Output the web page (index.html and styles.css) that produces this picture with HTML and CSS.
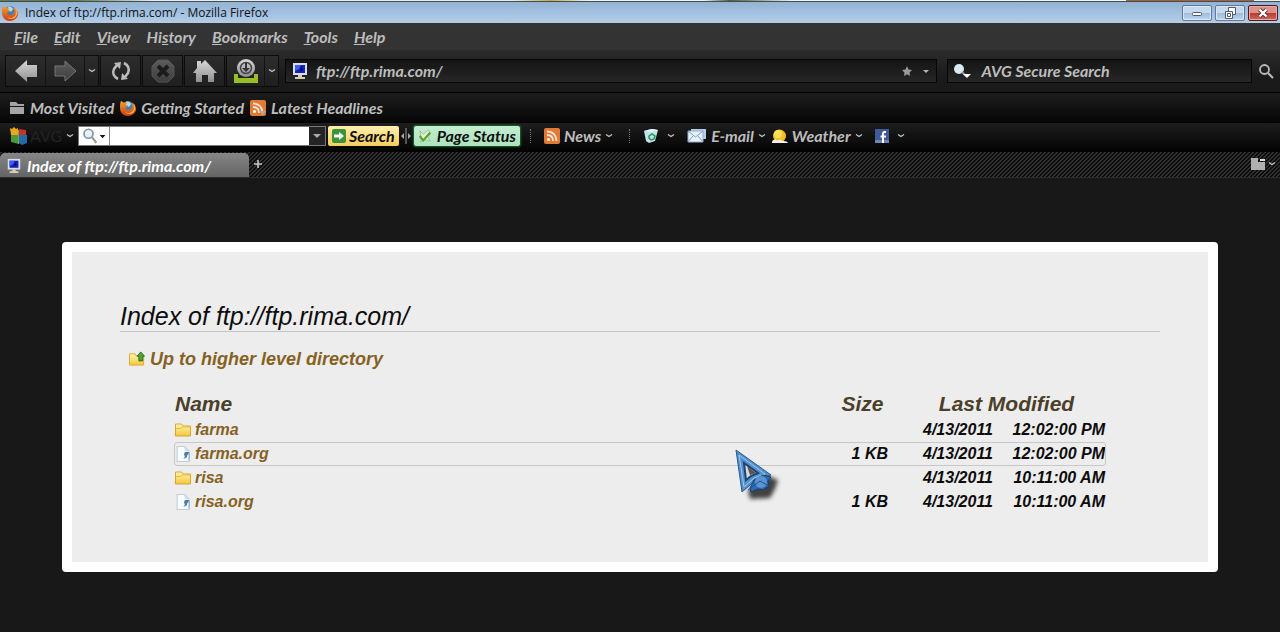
FILE: index.html
```html
<!DOCTYPE html>
<html lang="en">
  <head>
    <meta charset="UTF-8" />
    <title>Index of ftp://ftp.rima.com/</title>
    <link rel="stylesheet" href="styles.css">
  </head>
  <body>
    <!-- Shared icons -->
    <svg class="sprite" aria-hidden="true">
      <defs>
        <linearGradient id="silver" x1="0" y1="0" x2="0" y2="1">
          <stop offset="0" stop-color="#d8d8d8" />
          <stop offset="1" stop-color="#8f8f8f" />
        </linearGradient>
        <linearGradient id="dim" x1="0" y1="0" x2="0" y2="1">
          <stop offset="0" stop-color="#5c5c5c" />
          <stop offset="1" stop-color="#3e3e3e" />
        </linearGradient>
        <linearGradient id="gold" x1="0" y1="0" x2="0" y2="1">
          <stop offset="0" stop-color="#fff7b0" />
          <stop offset="1" stop-color="#f4c738" />
        </linearGradient>
        <linearGradient id="fox" x1="0" y1="0" x2="0" y2="1">
          <stop offset="0" stop-color="#f6a02c" />
          <stop offset="1" stop-color="#cf3d10" />
        </linearGradient>
      </defs>
      <symbol id="firefox" viewBox="0 0 16 16">
        <circle cx="8" cy="7" r="6" fill="#3f7fb5" />
        <path d="M6 2c2-1 4 0 5 2l-2 3-3-2z" fill="#b5dcec" />
        <path d="M1 1c1 0 2 1 3 2 1-1 2-1 3 0L6 5l2 1-3 2c1 3 5 3 7 0 1-2 0-4-1-5 3 0 5 3 5 6 0 4-4 7-8 7s-8-3-8-8c0-3 0-5 1-7z" fill="url(#fox)" />
        <path d="M12 2c3 2 3 6 1 9-2 2-5 3-8 1 4 4 10 1 10-4 0-3-1-5-3-6z" fill="#fbc453" />
      </symbol>
      <symbol id="computer" viewBox="0 0 16 18">
        <path d="M1 1h14v12H1z" fill="#d9dfea" />
        <path d="M3 3h10v8H3z" fill="#1522b8" />
        <path d="M3 3h6l-2 4-4 2z" fill="#3c5cf0" />
        <path d="M9 4l2 4-3 2z" fill="#0a0e6b" />
        <path d="M6 13h4v2h3v2H3v-2h3z" fill="#d5cfb8" />
      </symbol>
      <symbol id="chevron" viewBox="0 0 8 8">
        <path d="M1 2.500l3 2 3-2" fill="none" stroke="#c4c4c4" stroke-width="1.300" />
      </symbol>
      <symbol id="rss" viewBox="0 0 16 16">
        <rect width="16" height="16" rx="2" fill="#e27a34" />
        <circle cx="4.500" cy="11.500" r="1.600" fill="#fff" />
        <path d="M3 7c4 0 6 2 6 6M3 3.500c6 0 9.500 4 9.500 9.500" fill="none" stroke="#fbe5d3" stroke-width="1.800" />
      </symbol>
      <symbol id="folder" viewBox="0 0 16 15">
        <path d="M.5 13.500v-12h6l1.500 2h7.500v10z" fill="url(#gold)" stroke="#d8a733" />
        <path d="M1 6h5l1-1.500h8" fill="none" stroke="#e6bb45" />
      </symbol>
      <symbol id="file" viewBox="0 0 14 15">
        <path d="M1.500.5h7l4 4v10h-11z" fill="#f8fafc" stroke="#c3ccd4" />
        <path d="M8.500.5v4h4z" fill="#cfdae4" />
        <path d="M8 8c0-3 3-3 5-2l-2 3c0 2-2 3-4 3 2-1 2-2 1-4z" fill="#4a7fae" />
        <path d="M13 6v8" stroke="#93bada" />
      </symbol>
    </svg>

    <div class="desktop-edge"></div>
    <header class="title-bar">
      <svg class="icon"><use href="#firefox" /></svg>
      <span class="title">Index of ftp://ftp.rima.com/ - Mozilla Firefox</span>
      <div class="window-buttons">
        <button aria-label="Minimize"><svg viewBox="0 0 16 12"><rect x="3.500" y="5.500" width="9" height="3" rx="1" fill="#fff" stroke="#4b5b72" /></svg></button>
        <button aria-label="Restore"><svg viewBox="0 0 16 12"><path d="M6.500.5h7v7h-3v4h-7v-7h3z" fill="#fff" stroke="#4b5b72" /><path d="M6.500 4.500h4v3M5.500 6.500h3v3h-3z" fill="none" stroke="#4b5b72" /></svg></button>
        <button class="close" aria-label="Close"><svg viewBox="0 0 16 12"><path d="M4.500 2.500l7 7m0-7l-7 7" stroke="#5d3034" stroke-width="4" /><path d="M4.500 2.500l7 7m0-7l-7 7" stroke="#fff" stroke-width="2.400" /></svg></button>
      </div>
    </header>

    <nav class="menu-bar">
      <button><u>F</u>ile</button>
      <button><u>E</u>dit</button>
      <button><u>V</u>iew</button>
      <button>Hi<u>s</u>tory</button>
      <button><u>B</u>ookmarks</button>
      <button><u>T</u>ools</button>
      <button><u>H</u>elp</button>
    </nav>

    <div class="nav-bar">
      <div class="nav-buttons">
        <div class="nav-group">
          <button aria-label="Back"><svg viewBox="0 0 24 24"><path d="M1 12L13 1v5h10v12H13v5z" fill="url(#silver)" /></svg></button>
          <button aria-label="Forward"><svg viewBox="0 0 24 24"><path d="M23 12L12 2v5H2v10h10v5z" fill="url(#dim)" stroke="#777" /></svg></button>
          <button class="drop" aria-label="Recent pages"><svg><use href="#chevron" /></svg></button>
        </div>
        <div class="nav-group">
          <button aria-label="Reload"><svg viewBox="0 0 24 24"><path d="M9 20C5 18 3 14 5 10l3-4M15 4c4 2 6 6 4 10l-3 4" fill="none" stroke="#bbb" stroke-width="2.600" /><path d="M5 4l7-1-1 7zM19 20l-7 1 1-7z" fill="#bbb" /></svg></button>
        </div>
        <div class="nav-group">
          <button aria-label="Stop"><svg viewBox="0 0 24 24"><path d="M7 1h10l6 6v10l-6 6H7l-6-6V7z" fill="url(#dim)" stroke="#555" /><path d="M7 7l10 10M17 7L7 17" stroke="#1c1c1c" stroke-width="4" /></svg></button>
        </div>
        <div class="nav-group">
          <button aria-label="Home"><svg viewBox="0 0 24 24"><path d="M0 14L4 9V2h4v3l4-4 12 13h-3v9h-6v-7H9v7H3v-9z" fill="url(#silver)" /></svg></button>
        </div>
        <div class="nav-group">
          <button class="narrow" aria-label="Downloads"><svg viewBox="0 0 24 24"><path d="M0 15h4v4h16v-4h4v9H0z" fill="#96bf23" /><circle cx="12" cy="9" r="9" fill="url(#silver)" /><circle cx="12" cy="9" r="5.500" fill="none" stroke="#444" stroke-width="1.500" /><path d="M11 3h2v6h3l-4 4-4-4h3z" fill="#333" /></svg></button>
          <button class="drop" aria-label="Download list"><svg><use href="#chevron" /></svg></button>
        </div>
      </div>
      <div class="field address">
        <svg class="icon"><use href="#computer" /></svg>
        <input type="text" aria-label="Address" value="ftp://ftp.rima.com/">
        <svg class="mini" viewBox="0 0 12 12"><path d="M6 1l1.500 3.500L11 5 8.500 7.500 9 11 6 9.200 3 11l.5-3.500L1 5l3.500-.5z" fill="#9a9a9a" /></svg>
        <svg class="mini" viewBox="0 0 12 12"><path d="M3 5h6L6 8z" fill="#b5b5b5" /></svg>
      </div>
      <div class="field web-search">
        <svg class="icon" viewBox="0 0 18 18"><circle cx="6" cy="7" r="5" fill="#dcebf3" /><path d="M9 10l4 4" stroke="#8f9ba3" stroke-width="2" /><path d="M10 12h8l-4 4z" fill="#fff" /></svg>
        <input type="text" aria-label="Web search" value="AVG Secure Search">
      </div>
      <button class="go" aria-label="Search the web"><svg viewBox="0 0 16 16"><circle cx="6.500" cy="6.500" r="4.500" fill="none" stroke="#bbb" stroke-width="1.800" /><path d="M10 10l5 5" stroke="#bbb" stroke-width="2" /></svg></button>
    </div>

    <nav class="bookmarks-bar">
      <a href="#"><svg class="icon" viewBox="0 0 16 16"><path d="M1 2h6l2 2h6v2H1zM1 7h14v7H1z" fill="#a5a5a5" /></svg>Most Visited</a>
      <a href="#"><svg class="icon"><use href="#firefox" /></svg>Getting Started</a>
      <a href="#"><svg class="icon" viewBox="0 0 16 16"><use href="#rss" /><path d="M9 11h7l-3 4z" fill="#aaa" /></svg>Latest Headlines</a>
    </nav>

    <div class="avg-bar">
      <button class="avg-logo" aria-label="AVG menu">
        <svg class="logo" viewBox="0 0 18 18"><path d="M0 1l2 1 2-2 2 2 2-1v7H1z" fill="#e8a71d" /><path d="M9 2l7 1v6H9z" fill="#c73325" /><path d="M1 8h8v9l-8-2z" fill="#4b9a35" /><path d="M9 8h8v8l-5 2-3-2z" fill="#256bac" /><path d="M8.500 3v14" stroke="#7ca64c" /></svg>
        <span>AVG</span>
        <svg class="chevron"><use href="#chevron" /></svg>
      </button>
      <div class="avg-search">
        <button class="engine" aria-label="Search engine"><svg viewBox="0 0 24 16"><circle cx="8" cy="6" r="4" fill="#e5f1f6" stroke="#8195a0" stroke-width="1.500" /><path d="M11 9l4 5" stroke="#9c9c8c" stroke-width="2" /><path d="M18 7h5l-2.500 3z" fill="#111" /></svg></button>
        <input type="text" aria-label="AVG search">
        <button class="history" aria-label="Search history"><svg viewBox="0 0 12 12"><path d="M2 4h8L6 8z" fill="#aaa" /></svg></button>
      </div>
      <button class="pill yellow"><svg class="pill-icon" viewBox="0 0 14 14"><rect width="14" height="14" rx="2" fill="#3c9436" /><path d="M2 5.500h5V3l5 4-5 4V8.500H2z" fill="#fff" /></svg>Search</button>
      <svg class="splitter" viewBox="0 0 10 18"><path d="M5 1v16" stroke="#999" /><path d="M3 6v6L0 9zM7 6v6l3-3z" fill="#aaa" /></svg>
      <button class="pill green"><svg class="pill-icon" viewBox="0 0 16 16"><path d="M2 2l4 4 6-5 2 5-3 3 3 5-6-2-5 3 1-5z" fill="#e4f1da" stroke="#7eae6c" stroke-width=".7" /><path d="M2 8l4 5 8-9" fill="none" stroke="#56a52c" stroke-width="2.500" /></svg>Page Status</button>
      <span class="separator"></span>
      <button class="feature"><svg class="icon"><use href="#rss" /></svg>News<svg class="chevron"><use href="#chevron" /></svg></button>
      <span class="separator"></span>
      <button class="feature recycle" aria-label="Clear history"><svg class="icon" viewBox="0 0 16 16"><path d="M1 3l7-2 7 1-3 11-6 2-3-2z" fill="#bfe3ee" /><path d="M1 3l8 1 6-2-6-1z" fill="#e6f7fb" /><path d="M6 8l3-2 3 2-1 3-3 1-2-2z" fill="none" stroke="#26934e" stroke-width="1.500" /></svg><svg class="chevron"><use href="#chevron" /></svg></button>
      <button class="feature"><svg class="mail" viewBox="0 0 20 16"><path d="M4 1h15v10H4z" fill="#b9cce5" /><path d="M1 3h15v11H1z" fill="#e9f1fb" stroke="#8faed4" /><path d="M1 3l7.500 6L16 3M1 14l5-6M16 14l-5-6" fill="none" stroke="#7d9fc9" /></svg>E-mail<svg class="chevron"><use href="#chevron" /></svg></button>
      <button class="feature weather"><svg class="icon" viewBox="0 0 16 16"><circle cx="7.500" cy="8" r="6.500" fill="#f8bd22" /><circle cx="6" cy="6" r="4" fill="#fde05a" /><path d="M0 14c1-3 4-3 5-1 2-2 5-1 5 0 2 0 5 0 6 2H0z" fill="#f2f2ec" /></svg>Weather<svg class="chevron"><use href="#chevron" /></svg></button>
      <button class="feature facebook" aria-label="Facebook"><svg class="square" viewBox="0 0 14 14"><path d="M0 0h14v14H0z" fill="#3f5a96" /><path d="M0 11h14v3H0z" fill="#7183b0" /><path d="M11 3H9.500C8 3 8 4 8 5v9M5.500 7.500H11" fill="none" stroke="#fff" stroke-width="2" /></svg><svg class="chevron"><use href="#chevron" /></svg></button>
    </div>

    <div class="tab-bar">
      <button class="tab"><svg class="icon"><use href="#computer" /></svg>Index of ftp://ftp.rima.com/</button>
      <button class="new-tab" aria-label="New tab"><svg viewBox="0 0 10 10"><path d="M5 1v8M1 5h8" stroke="#c6c6c6" stroke-width="1.600" /></svg></button>
      <button class="tab-list" aria-label="List all tabs"><svg class="square" viewBox="0 0 14 14"><path d="M0 1h7v4h7v8H0z" fill="#b0b0b0" /><path d="M9 2h5v2H9z" fill="#ddd" /></svg><svg class="chevron"><use href="#chevron" /></svg></button>
    </div>

    <main class="listing">
      <h1>Index of ftp://ftp.rima.com/</h1>
      <a class="up" href="#"><svg class="icon" viewBox="0 0 17 16"><path d="M.5 14.500v-12h6l1 2h8v10z" fill="url(#gold)" stroke="#dca93a" /><path d="M12.500.5l4 4.500h-2v5h-4V5h-2z" fill="#4fa43a" stroke="#246d22" /></svg>Up to higher level directory</a>
      <table>
        <thead>
          <tr><th class="name">Name</th><th class="size">Size</th><th colspan="2">Last Modified</th></tr>
        </thead>
        <tbody>
          <tr><td class="name"><a href="#"><svg class="icon"><use href="#folder" /></svg>farma</a></td><td class="size"></td><td class="date">4/13/2011</td><td class="time">12:02:00 PM</td></tr>
          <tr class="active"><td class="name"><a href="#"><svg class="icon"><use href="#file" /></svg>farma.org</a></td><td class="size">1 KB</td><td class="date">4/13/2011</td><td class="time">12:02:00 PM</td></tr>
          <tr><td class="name"><a href="#"><svg class="icon"><use href="#folder" /></svg>risa</a></td><td class="size"></td><td class="date">4/13/2011</td><td class="time">10:11:00 AM</td></tr>
          <tr><td class="name"><a href="#"><svg class="icon"><use href="#file" /></svg>risa.org</a></td><td class="size">1 KB</td><td class="date">4/13/2011</td><td class="time">10:11:00 AM</td></tr>
        </tbody>
      </table>
    </main>

    <!-- Mouse pointer -->
    <svg class="pointer" viewBox="0 0 48 56">
      <path d="M14 42l20-14 10 4-3 9-5 9-20 1z" fill="#222" fill-opacity=".85" class="pointer-shadow" />
      <path d="M2 2l35 25-14 4-15 13z" fill="#5590cc" stroke="#275a94" />
      <path d="M5 7l26 19-11 4-10 9z" fill="none" stroke="#9cc8ef" />
      <path d="M10 15l14 10-7 3-5 4z" fill="#d8dce0" stroke="#1d436f" stroke-width="2" />
      <path d="M13 18l9 7-6 2z" fill="#555" />
      <path d="M16 40l4-8 9-5 8 2-3 4 1 5-6 4-5-1-7 3z" fill="#2c69ad" stroke="#173e6e" />
      <circle cx="27" cy="34" r="6" fill="#5a94d2" />
      <path d="M14 42l12-9 9 5" fill="none" stroke="#1f518b" />
    </svg>
  </body>
</html>
```

FILE: styles.css
```css
:root {
  --chrome-font: Lato, "Open Sans", sans-serif;
  --chrome-text: #bdbdbd;
  --link: #86611f;
}
* {
  box-sizing: border-box;
}
body {
  margin: 0;
  min-height: 100vh;
  background: #181818;
  font-family: "Liberation Sans", Arial, sans-serif;
}
button,
input {
  margin: 0;
  padding: 0;
  border: 0;
  background: none;
  color: inherit;
  font: inherit;
}
button,
a {
  white-space: nowrap;
}
a {
  text-decoration: none;
}
svg {
  display: block;
  flex: none;
}
.sprite {
  position: absolute;
  width: 0;
  height: 0;
}
.icon {
  width: 16px;
  height: 16px;
}
.chevron {
  width: 8px;
  height: 8px;
}
.square {
  width: 14px;
  height: 14px;
}

/* Title bar */
.desktop-edge {
  height: 2px;
  background: linear-gradient(90deg, #6b7a48 0 6%, #e8ecee 12% 40%, #c9a640 43%, #f2f2f2 46% 55%, #555a33 57%, #f4f4f4 62% 88%, #a8603a 88% 98%, #eee 98%);
  border-bottom: 1px solid #3d5056;
}
.title-bar {
  display: flex;
  align-items: center;
  height: 21px;
  padding: 0 2px;
  background: linear-gradient(#94b3d2, #aac8e8 80%, #bccbdc);
  color: #111;
  font: 12px "Open Sans", "Noto Sans", sans-serif;
}
.title {
  flex: 1;
  padding-left: 7px;
}
.window-buttons {
  display: flex;
  gap: 3px;
}
.window-buttons button {
  display: flex;
  align-items: center;
  justify-content: center;
  width: 30px;
  height: 16px;
  border: 1px solid #60789a;
  border-radius: 2px;
  background: linear-gradient(#c6d8ec 50%, #9fbbd9 50%, #bfd5ec);
  box-shadow: inset 0 0 0 1px #d9e6f4;
}
.window-buttons .close {
  border-color: #4c1a22;
  background: linear-gradient(#dc9288 50%, #b93a30 50%, #d1685a);
  box-shadow: inset 0 0 0 1px #e5aaa2;
}
.window-buttons svg {
  width: 16px;
  height: 12px;
}

/* Menus and toolbars */
.menu-bar,
.nav-bar,
.bookmarks-bar,
.avg-bar,
.tab-bar {
  display: flex;
  align-items: center;
  color: var(--chrome-text);
  font: italic bold 16px/18px var(--chrome-font);
}
.menu-bar {
  gap: 16px;
  height: 27px;
  padding: 0 14px;
  background: linear-gradient(#30353b, #333 5px);
}
.nav-bar {
  gap: 6px;
  height: 43px;
  padding: 0 6px 0 5px;
  background: linear-gradient(#2c2c2c, #1b1b1b 60%, #191919);
  border-bottom: 1px solid #000;
}
.nav-buttons {
  display: flex;
  gap: 1px;
}
.nav-group {
  display: flex;
  height: 32px;
  border: 1px solid #0c0c0c;
  background: linear-gradient(#2d2d2d, #1f1f1f);
}
.nav-group button {
  display: flex;
  align-items: center;
  justify-content: center;
  width: 39px;
}
.nav-group button + button {
  border-left: 1px solid #131313;
}
.nav-group .narrow {
  width: 37px;
}
.nav-group .drop {
  width: 14px;
}
.nav-group svg {
  width: 24px;
  height: 24px;
}
.nav-group .drop svg {
  width: 8px;
  height: 8px;
}
.field {
  display: flex;
  align-items: center;
  height: 24px;
  padding: 0 4px 0 5px;
  border: 1px solid #070707;
  background: linear-gradient(#141414, #272727);
}
.field input {
  flex: 1;
  min-width: 0;
}
.field .icon {
  width: 18px;
  height: 18px;
}
.address {
  flex: 1;
  gap: 7px;
}
.mini {
  width: 12px;
  height: 12px;
}
.web-search {
  width: 24%;
  margin-left: 4px;
  gap: 10px;
}
.go svg {
  width: 16px;
  height: 16px;
}
.bookmarks-bar {
  gap: 6px;
  height: 30px;
  padding: 0 9px;
  background: linear-gradient(#1d1d1d, #060606);
  border-bottom: 1px solid #000;
}
.bookmarks-bar a {
  display: flex;
  align-items: center;
  gap: 5px;
  color: inherit;
}

/* AVG toolbar */
.avg-bar {
  height: 29px;
  padding: 0 10px 3px;
  background: linear-gradient(#1e1e1e, #030303);
}
.avg-logo {
  display: flex;
  align-items: center;
  width: 68px;
  color: #222;
  font-style: normal;
  font-weight: normal;
}
.avg-logo span {
  flex: 1;
  padding-left: 2px;
  text-align: left;
}
.avg-logo .chevron {
  margin-right: 4px;
}
.logo {
  width: 18px;
  height: 18px;
}
.avg-search {
  display: flex;
  width: 248px;
  height: 20px;
  border: 1px solid #777;
  background: #fff;
}
.engine {
  width: 31px;
  border-right: 1px solid #888;
}
.engine svg {
  width: 28px;
  height: 18px;
}
.avg-search input {
  flex: 1;
  min-width: 0;
  color: #000;
}
.history {
  display: flex;
  align-items: center;
  justify-content: center;
  width: 16px;
  background: #242424;
}
.history svg {
  width: 12px;
  height: 12px;
}
.pill {
  display: flex;
  align-items: center;
  gap: 3px;
  height: 20px;
  padding: 0 4px;
  border-radius: 2px;
  color: #0d0d0d;
}
.yellow {
  margin-left: 2px;
  background: linear-gradient(#fff0b0, #f7cd5c);
}
.green {
  gap: 5px;
  background: linear-gradient(#c3edcf, #aee2bd);
  box-shadow: 0 0 2px 1px #1b6b2c;
}
.pill-icon {
  width: 14px;
  height: 14px;
}
.splitter {
  width: 10px;
  height: 18px;
  margin: 0 3px 0 2px;
}
.separator {
  height: 14px;
  margin: 0 13px 0 10px;
  border-left: 1px dotted #777;
}
.feature {
  display: flex;
  align-items: center;
  gap: 4px;
  margin-right: 6px;
}
.recycle,
.facebook {
  gap: 8px;
}
.recycle {
  margin-right: 12px;
}
.weather {
  margin-right: 12px;
}
.mail {
  width: 20px;
  height: 16px;
}

/* Tabs */
.tab-bar {
  align-items: flex-end;
  height: 26px;
  background: linear-gradient(135deg, #303030 25%, #0b0b0b 25% 50%, #303030 50% 75%, #0b0b0b 75%) 0 0 / 4px 4px;
  border-bottom: 1px solid #2b2b2b;
}
.tab {
  display: flex;
  align-items: center;
  gap: 5px;
  width: 249px;
  height: 24px;
  padding: 2px 6px 0;
  border-radius: 5px 5px 0 0;
  background: linear-gradient(#868686, #646464);
  color: #fff;
}
.new-tab {
  align-self: center;
  margin: 0 auto 2px 4px;
}
.new-tab svg {
  width: 10px;
  height: 10px;
}
.tab-list {
  display: flex;
  align-self: center;
  align-items: center;
  gap: 3px;
  padding: 0 4px 2px 0;
}

/* Directory listing */
.listing {
  margin: 64px 62px 60px;
  padding: 48px;
  border: 10px solid #fff;
  border-radius: 4px;
  background: #ededed;
  color: #0c0c0c;
  font-style: italic;
}
h1 {
  margin: 0 0 16px;
  padding-top: 1px;
  border-bottom: 1px solid #c4c4c4;
  font-size: 25px;
  font-weight: normal;
  line-height: 30px;
}
.up {
  display: flex;
  align-items: center;
  gap: 5px;
  margin-left: 9px;
  color: var(--link);
  font-size: 18px;
  font-weight: bold;
  line-height: 22px;
}
table {
  width: calc(100% - 108px);
  margin: 19px 54px 0;
  border-collapse: separate;
  border-spacing: 0;
  font-size: 16px;
  font-weight: bold;
  line-height: 22px;
}
th,
td {
  height: 24px;
  padding: 0;
  white-space: nowrap;
}
th {
  height: 29px;
  color: #4a3f2a;
  font-size: 21px;
}
.name {
  padding-left: 1px;
  text-align: left;
}
td a {
  display: flex;
  align-items: center;
  gap: 4px;
  color: var(--link);
}
.size {
  width: 70px;
  padding-right: 19px;
}
td.size,
.date,
.time {
  text-align: right;
}
.date {
  width: 86px;
}
.time {
  width: 113px;
  padding-right: 1px;
}
.active {
  outline: 1px solid #c6c9ca;
  outline-offset: -1px;
  border-radius: 3px;
}

.pointer {
  position: absolute;
  top: 448px;
  left: 734px;
  width: 48px;
  height: 56px;
}
.pointer-shadow {
  filter: blur(2px);
}
```
